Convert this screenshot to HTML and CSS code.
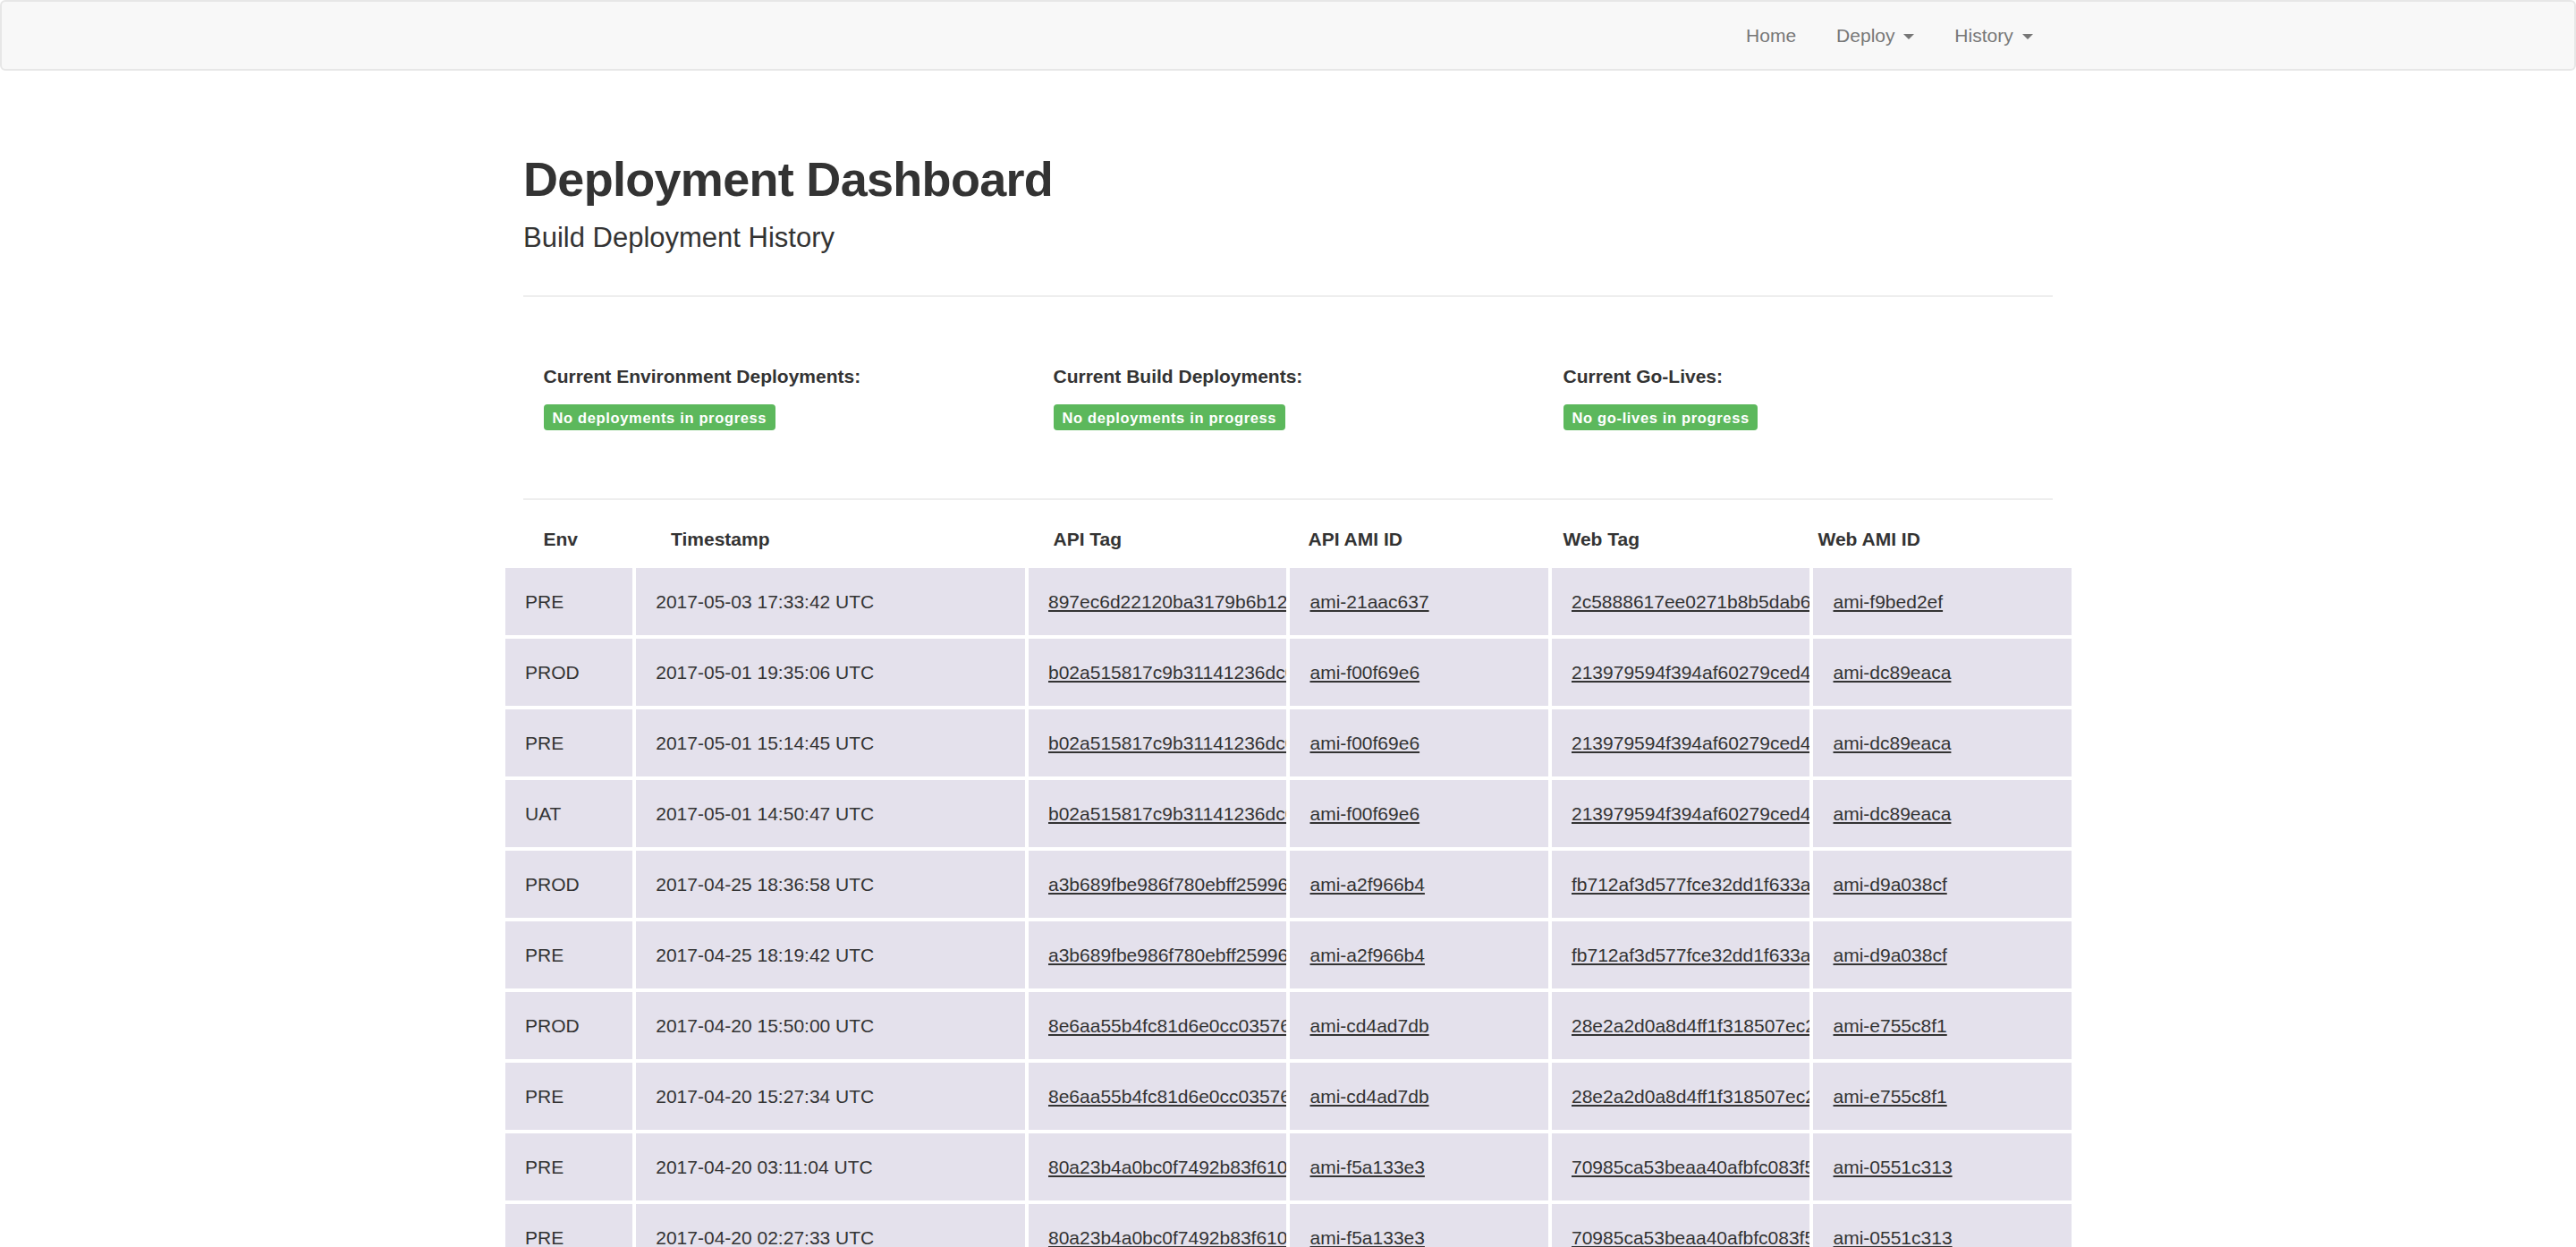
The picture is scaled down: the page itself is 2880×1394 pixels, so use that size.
FILE: index.html
```html
<!DOCTYPE html>
<html lang="en">
<head>
<meta charset="utf-8">
<title>Deployment Dashboard</title>
<link rel="stylesheet" href="styles.css">
</head>
<body>
<nav class="navbar">
  <div class="container nav-inner">
    <ul class="nav">
      <li><a href="#">Home</a></li>
      <li><a href="#">Deploy <span class="caret"></span></a></li>
      <li><a href="#">History <span class="caret"></span></a></li>
    </ul>
  </div>
</nav>

<main class="container">
  <header class="page-header">
    <h1 class="title">Deployment Dashboard</h1>
    <p class="lead">Build Deployment History</p>
  </header>

  <section class="status">
    <div class="status-col">
      <div class="status-label">Current Environment Deployments:</div>
      <span class="badge">No deployments in progress</span>
    </div>
    <div class="status-col">
      <div class="status-label">Current Build Deployments:</div>
      <span class="badge">No deployments in progress</span>
    </div>
    <div class="status-col">
      <div class="status-label">Current Go-Lives:</div>
      <span class="badge">No go-lives in progress</span>
    </div>
  </section>

  <div class="history-head">
    <div class="hcell">Env</div>
    <div class="hcell">Timestamp</div>
    <div class="hcell">API Tag</div>
    <div class="hcell">API AMI ID</div>
    <div class="hcell">Web Tag</div>
    <div class="hcell">Web AMI ID</div>
  </div>

  <div class="history">
    <div class="row">
      <div class="cell">PRE</div>
      <div class="cell">2017-05-03 17:33:42 UTC</div>
      <div class="cell"><a href="#">897ec6d22120ba3179b6b1244e2</a></div>
      <div class="cell"><a href="#">ami-21aac637</a></div>
      <div class="cell"><a href="#">2c5888617ee0271b8b5dab6e17</a></div>
      <div class="cell"><a href="#">ami-f9bed2ef</a></div>
    </div>
    <div class="row">
      <div class="cell">PROD</div>
      <div class="cell">2017-05-01 19:35:06 UTC</div>
      <div class="cell"><a href="#">b02a515817c9b31141236dc07a</a></div>
      <div class="cell"><a href="#">ami-f00f69e6</a></div>
      <div class="cell"><a href="#">213979594f394af60279ced4a1</a></div>
      <div class="cell"><a href="#">ami-dc89eaca</a></div>
    </div>
    <div class="row">
      <div class="cell">PRE</div>
      <div class="cell">2017-05-01 15:14:45 UTC</div>
      <div class="cell"><a href="#">b02a515817c9b31141236dc07a</a></div>
      <div class="cell"><a href="#">ami-f00f69e6</a></div>
      <div class="cell"><a href="#">213979594f394af60279ced4a1</a></div>
      <div class="cell"><a href="#">ami-dc89eaca</a></div>
    </div>
    <div class="row">
      <div class="cell">UAT</div>
      <div class="cell">2017-05-01 14:50:47 UTC</div>
      <div class="cell"><a href="#">b02a515817c9b31141236dc07a</a></div>
      <div class="cell"><a href="#">ami-f00f69e6</a></div>
      <div class="cell"><a href="#">213979594f394af60279ced4a1</a></div>
      <div class="cell"><a href="#">ami-dc89eaca</a></div>
    </div>
    <div class="row">
      <div class="cell">PROD</div>
      <div class="cell">2017-04-25 18:36:58 UTC</div>
      <div class="cell"><a href="#">a3b689fbe986f780ebff25996c</a></div>
      <div class="cell"><a href="#">ami-a2f966b4</a></div>
      <div class="cell"><a href="#">fb712af3d577fce32dd1f633a8</a></div>
      <div class="cell"><a href="#">ami-d9a038cf</a></div>
    </div>
    <div class="row">
      <div class="cell">PRE</div>
      <div class="cell">2017-04-25 18:19:42 UTC</div>
      <div class="cell"><a href="#">a3b689fbe986f780ebff25996c</a></div>
      <div class="cell"><a href="#">ami-a2f966b4</a></div>
      <div class="cell"><a href="#">fb712af3d577fce32dd1f633a8</a></div>
      <div class="cell"><a href="#">ami-d9a038cf</a></div>
    </div>
    <div class="row">
      <div class="cell">PROD</div>
      <div class="cell">2017-04-20 15:50:00 UTC</div>
      <div class="cell"><a href="#">8e6aa55b4fc81d6e0cc0357611</a></div>
      <div class="cell"><a href="#">ami-cd4ad7db</a></div>
      <div class="cell"><a href="#">28e2a2d0a8d4ff1f318507ec2b</a></div>
      <div class="cell"><a href="#">ami-e755c8f1</a></div>
    </div>
    <div class="row">
      <div class="cell">PRE</div>
      <div class="cell">2017-04-20 15:27:34 UTC</div>
      <div class="cell"><a href="#">8e6aa55b4fc81d6e0cc0357611</a></div>
      <div class="cell"><a href="#">ami-cd4ad7db</a></div>
      <div class="cell"><a href="#">28e2a2d0a8d4ff1f318507ec2b</a></div>
      <div class="cell"><a href="#">ami-e755c8f1</a></div>
    </div>
    <div class="row">
      <div class="cell">PRE</div>
      <div class="cell">2017-04-20 03:11:04 UTC</div>
      <div class="cell"><a href="#">80a23b4a0bc0f7492b83f6109d</a></div>
      <div class="cell"><a href="#">ami-f5a133e3</a></div>
      <div class="cell"><a href="#">70985ca53beaa40afbfc083f5e</a></div>
      <div class="cell"><a href="#">ami-0551c313</a></div>
    </div>
    <div class="row">
      <div class="cell">PRE</div>
      <div class="cell">2017-04-20 02:27:33 UTC</div>
      <div class="cell"><a href="#">80a23b4a0bc0f7492b83f6109d</a></div>
      <div class="cell"><a href="#">ami-f5a133e3</a></div>
      <div class="cell"><a href="#">70985ca53beaa40afbfc083f5e</a></div>
      <div class="cell"><a href="#">ami-0551c313</a></div>
    </div>
  </div>
</main>
</body>
</html>
```

FILE: styles.css
```css
* { box-sizing: border-box; }

html, body {
  margin: 0;
  padding: 0;
  background: #fff;
}

body {
  font-family: "Liberation Sans", Arial, Helvetica, sans-serif;
  font-size: 21px;
  line-height: 30px;
  color: #333;
}

.container {
  width: 1710px;
  margin: 0 auto;
}

/* Navbar */
.navbar {
  height: 79px;
  background: #f8f8f8;
  border: 2px solid #e7e7e7;
  border-radius: 6px;
}

.nav-inner {
  display: flex;
  justify-content: flex-end;
}

.nav {
  list-style: none;
  margin: 0;
  padding: 0;
  display: flex;
}

.nav a {
  display: block;
  padding: 0 22.5px;
  line-height: 75px;
  color: #777;
  text-decoration: none;
  font-size: 21px;
}

.caret {
  display: inline-block;
  width: 0;
  height: 0;
  margin-left: 4px;
  vertical-align: middle;
  border-top: 6px solid #777;
  border-left: 6px solid transparent;
  border-right: 6px solid transparent;
}

/* Header */
.page-header {
  margin-top: 92px;
  padding-bottom: 44px;
  border-bottom: 2px solid #eee;
}

.title {
  margin: 0;
  font-size: 54px;
  line-height: 59px;
  font-weight: bold;
  letter-spacing: -0.7px;
  color: #333;
}

.lead {
  margin: 16px 0 0;
  font-size: 31px;
  line-height: 40px;
  font-weight: 300;
  color: #333;
}

/* Status */
.status {
  display: grid;
  grid-template-columns: repeat(3, 1fr);
  padding: 74px 0 76px;
  border-bottom: 2px solid #eee;
}

.status-col {
  padding: 0 22.5px;
}

.status-label {
  font-weight: bold;
  line-height: 30px;
  margin-bottom: 15px;
}

.badge {
  display: inline-block;
  background: #5cb85c;
  color: #fff;
  font-weight: bold;
  font-size: 16.5px;
  line-height: 16.5px;
  letter-spacing: 0.65px;
  padding: 7.5px 9.5px 5.4px 10px;
  border-radius: 4px;
}

/* History header */
.history-head {
  display: grid;
  grid-template-columns: 1fr 3fr 2fr 2fr 2fr 2fr;
  margin-top: 29px;
}

.hcell {
  padding: 0 22.5px;
  font-weight: bold;
  line-height: 30px;
}

/* History rows */
.history {
  margin: 15px -22.5px 0;
}

.row {
  display: grid;
  grid-template-columns: 1fr 3fr 2fr 2fr 2fr 2fr;
}

.cell {
  background: #e4e1ec;
  border: 2px solid #fff;
  padding: 22.5px;
  line-height: 30px;
  white-space: nowrap;
  overflow: hidden;
}

.cell a {
  color: #333;
  text-decoration: underline;
}
```
